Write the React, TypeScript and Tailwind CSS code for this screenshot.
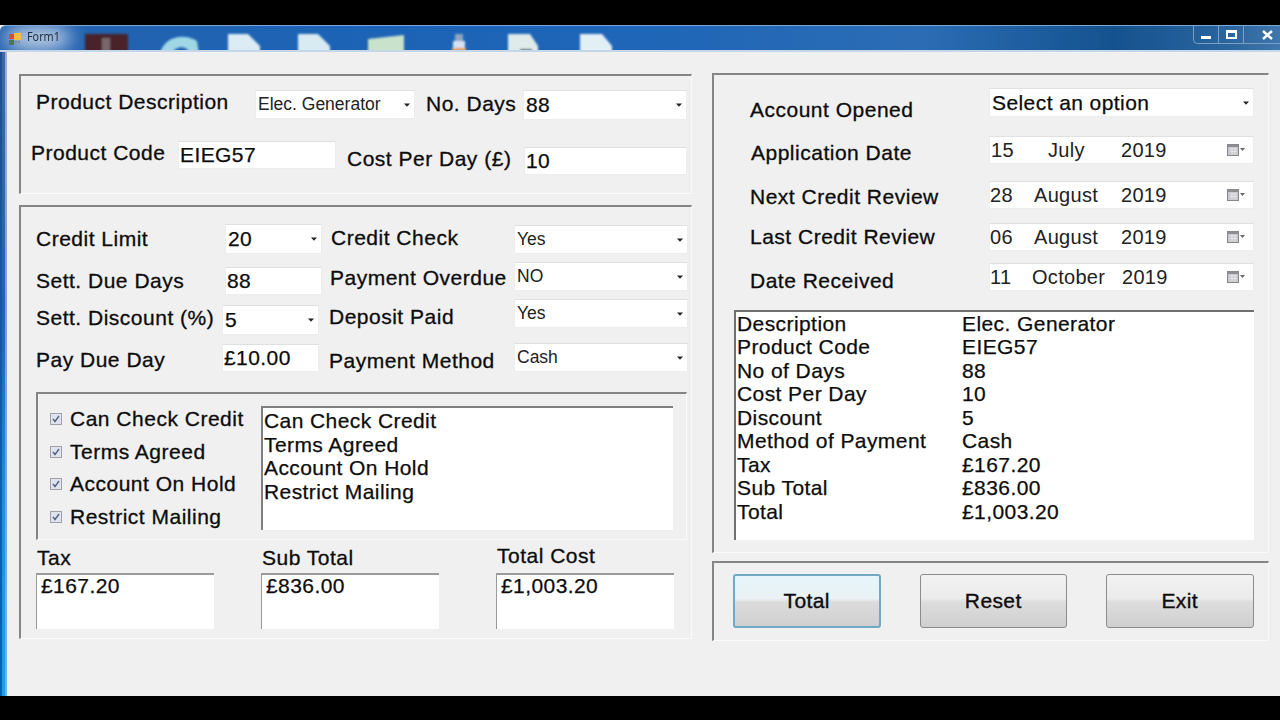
import React from "react";

const LABEL = "block whitespace-nowrap text-[21px] leading-[24px] tracking-[0.5px] text-[#0c0c0c] [-webkit-text-stroke:0.3px_#0c0c0c]";
const VALUE = "whitespace-nowrap text-[21px] tracking-[0.42px] text-[#0c0c0c] [-webkit-text-stroke:0.25px_#0c0c0c]";
const SMALL = "whitespace-nowrap text-[17.5px] text-[#222]";
const DATE = "whitespace-nowrap text-[20px] tracking-[0.3px] text-[#222]";
const FIELD = "flex items-center bg-white border border-[#ededed] border-t-[#e0e0e0] shrink-0";
const GROUP = "border-t-2 border-l-2 border-t-[#858585] border-l-[#858585] border-r border-b border-r-[#fafafa] border-b-[#fafafa]";

function Arrow() {
  return (
    <svg width="6" height="4" viewBox="0 0 6 4" className="ml-auto mr-[4px] shrink-0">
      <path d="M0 0.5H6L3 3.8Z" fill="#222" />
    </svg>
  );
}

function Lbl({ text, w, ml = 0, mt = 0 }: { text: string; w: string; ml?: number; mt?: number }) {
  return (
    <span className={`${w} shrink-0 ${LABEL}`} style={{ marginLeft: ml, marginTop: mt }}>
      {text}
    </span>
  );
}

function Combo({ text, w, h, mt = 0, small = false }: { text: string; w: string; h: string; mt?: number; small?: boolean }) {
  return (
    <div className={`${FIELD} ${w} ${h} pl-[2px]`} style={{ marginTop: mt }}>
      <span className={small ? SMALL : VALUE}>{text}</span>
      <Arrow />
    </div>
  );
}

function Input({ text, w, mt = 0 }: { text: string; w: string; mt?: number }) {
  return (
    <div className={`${FIELD} ${w} h-[28px] pl-[1px]`} style={{ marginTop: mt }}>
      <span className={VALUE}>{text}</span>
    </div>
  );
}

function Cal() {
  return (
    <svg width="18" height="12" viewBox="0 0 18 12" className="ml-auto mr-[8px] shrink-0">
      <rect x="0.5" y="0.5" width="11" height="11" fill="#c9c9cf" stroke="#85858c" />
      <rect x="0.5" y="0.5" width="11" height="2.5" fill="#8e8e95" />
      <path d="M3 5H10M3 7.5H10M5 4V10.5M8 4V10.5" stroke="#ececec" strokeWidth="0.8" />
      <path d="M13 4H18L15.5 7Z" fill="#666" />
    </svg>
  );
}

function DateField({ d, m, mx, y, dx = 2 }: { d: string; m: string; mx: string; y: string; dx?: number }) {
  return (
    <div className={`${FIELD} w-[265px] h-[28px]`}>
      <span className={`${DATE} w-[36px]`} style={{ marginLeft: dx - 1 }}>{d}</span>
      <span className={`${mx} ${DATE}`}>{m}</span>
      <span className={DATE}>{y}</span>
      <Cal />
    </div>
  );
}

function Check({ text }: { text: string }) {
  return (
    <div className="flex items-center h-[32.5px] pl-[12px]">
      <span className="flex items-center justify-center w-[12px] h-[12px] border border-[#a0a0a8] bg-[#dfe3ee] shrink-0">
        <svg width="8" height="8" viewBox="0 0 8 8">
          <path d="M1 4L3 6.5L7 1" fill="none" stroke="#56608a" strokeWidth="1.4" />
        </svg>
      </span>
      <span className={`ml-[8px] ${LABEL}`}>{text}</span>
    </div>
  );
}

function ResultBox({ label, value, w, ml, mt, gap }: { label: string; value: string; w: string; ml: string; mt: string; gap: string }) {
  return (
    <div className={`${w} ${ml} shrink-0`}>
      <span className={`${mt} ml-[1px] ${LABEL}`}>{label}</span>
      <div className={`${gap} h-[56px] bg-white border-t-2 border-l border-t-[#9a9a9a] border-l-[#9a9a9a] pl-[4px] ${VALUE} leading-[22px]`}>
        {value}
      </div>
    </div>
  );
}

const SUMMARY: [string, string][] = [
  ["Description", "Elec. Generator"],
  ["Product Code", "EIEG57"],
  ["No of Days", "88"],
  ["Cost Per Day", "10"],
  ["Discount", "5"],
  ["Method of Payment", "Cash"],
  ["Tax", "£167.20"],
  ["Sub Total", "£836.00"],
  ["Total", "£1,003.20"],
];

function TitleArt() {
  return (
    <svg width="700" height="26" viewBox="0 0 700 26" className="absolute left-0 top-0">
      <defs>
        <filter id="soft" x="-30%" y="-30%" width="160%" height="160%">
          <feGaussianBlur stdDeviation="1.1" />
        </filter>
        <filter id="glow" x="-30%" y="-60%" width="160%" height="220%">
          <feGaussianBlur stdDeviation="9" />
        </filter>
      </defs>
      <ellipse cx="38" cy="12" rx="34" ry="13" fill="#b9cbe4" filter="url(#glow)" />
      <g filter="url(#soft)">
        <rect x="85" y="8" width="43" height="20" fill="#48202c" />
        <rect x="102" y="12" width="8" height="16" fill="#77686c" />
        <path d="M160 28C163 12 182 6 197 15L199 28H190C188 20 176 18 172 28Z" fill="#9fd8e4" />
        <path d="M228 8H248L260 20V28H228Z" fill="#dcecf4" />
        <path d="M298 8H318L330 20V28H298Z" fill="#d8eaf2" />
        <path d="M368 13L404 9V28H368Z" fill="#c9e2cc" />
        <rect x="455" y="8" width="8" height="8" fill="#8fa4c4" />
        <rect x="453" y="15" width="12" height="7" fill="#d5e2f0" />
        <rect x="452" y="22" width="14" height="6" fill="#e89a4c" />
        <path d="M508 8H530L538 20V28H508Z" fill="#dfeaea" />
        <rect x="520" y="23" width="12" height="5" fill="#4a4a70" />
        <path d="M580 8H602L612 20V28H580Z" fill="#e2f0f6" />
      </g>
      <g>
        <rect x="9" y="8" width="5" height="5" fill="#d84a3a" />
        <rect x="14" y="7" width="7" height="7" fill="#f0c040" />
        <rect x="9" y="14" width="5" height="5" fill="#4a7a4a" />
        <rect x="15" y="15" width="2" height="2" fill="#888" />
        <rect x="18" y="15" width="2" height="2" fill="#888" />
      </g>
    </svg>
  );
}

export default function App() {
  return (
    <div className="w-[1280px] h-[720px] bg-black pt-[25px] pb-[24px] overflow-hidden font-['Liberation_Sans',sans-serif]">
      <div className="h-full flex flex-col bg-[#f0f0f0]">
        {/* title bar */}
        <div className="relative h-[27px] shrink-0 flex border-t border-t-[#7fa8d8] border-b-2 border-b-[#c4d6e8] rounded-tl-[6px] overflow-hidden bg-[linear-gradient(90deg,#2463ae_0%,#1c63b6_30%,#1f66b8_50%,#2b6cb4_72%,#14528f_87%,#2b659e_96%,#3f76ab_100%)]">
          <TitleArt />
          <span className="relative ml-[27px] mt-[3px] text-[12px] leading-[16px] text-[#1e2c3e] font-['Noto_Sans',sans-serif] scale-x-90 origin-left">Form1</span>
          <div className="relative ml-auto flex h-[18px] w-[87px] border-l border-b border-[#7d9fc4] rounded-bl-[5px]">
            <div className="w-[25px] flex items-center justify-center border-r border-[#7d9fc4]">
              <span className="mt-[5px] block w-[10px] h-[3px] bg-white" />
            </div>
            <div className="w-[25px] flex items-center justify-center border-r border-[#7d9fc4]">
              <span className="block w-[11px] h-[9px] border-2 border-t-[3px] border-white" />
            </div>
            <div className="flex-1 flex items-center justify-center pl-[10px]">
              <svg width="11" height="10" viewBox="0 0 11 10">
                <path d="M1 1L10 9M10 1L1 9" stroke="white" strokeWidth="2.4" />
              </svg>
            </div>
          </div>
        </div>

        {/* client area */}
        <div className="flex-1 flex">
          {/* window frame */}
          <div className="w-[7px] shrink-0 flex">
            <div className="w-[2px] bg-[linear-gradient(180deg,#1f4f94_0%,#1259a8_50%,#0f5fb0_100%)]" />
            <div className="w-[3px] bg-[linear-gradient(180deg,#3d68a8_0%,#1f63b4_40%,#2a8ad8_70%,#1ea0e8_100%)]" />
            <div className="w-[2px] bg-[linear-gradient(180deg,#9cb0cf_0%,#7fa0cc_40%,#6aa8dc_70%,#6cb8e4_100%)]" />
          </div>
          {/* left column */}
          <div className="ml-[12px] mt-[22px] w-[673px] shrink-0 flex flex-col gap-[11px]">
            <div className={`${GROUP} h-[120px]`}>
              <div className="flex h-[64px]">
                <Lbl text="Product Description" w="w-[219px]" ml={15} mt={14} />
                <Combo text="Elec. Generator" w="w-[160px]" h="h-[29px]" mt={14} small />
                <Lbl text="No. Days" w="w-[97px]" ml={11} mt={16} />
                <Combo text="88" w="w-[164px]" h="h-[30px]" mt={14} />
              </div>
              <div className="flex">
                <Lbl text="Product Code" w="w-[147px]" ml={10} mt={1} />
                <Input text="EIEG57" w="w-[158px]" mt={1} />
                <Lbl text="Cost Per Day (£)" w="w-[177px]" ml={11} mt={7} />
                <Input text="10" w="w-[163px]" mt={7} />
              </div>
            </div>

            <div className={`${GROUP} h-[434px] pt-[17px]`}>
              <div className="flex h-[38px]">
                <Lbl text="Credit Limit" w="w-[189px]" ml={15} mt={3} />
                <Combo text="20" w="w-[97px]" h="h-[30px]" />
                <Lbl text="Credit Check" w="w-[183px]" ml={9} mt={2} />
                <Combo text="Yes" w="w-[174px]" h="h-[29px]" mt={1} small />
              </div>
              <div className="flex h-[37px]">
                <Lbl text="Sett. Due Days" w="w-[189px]" ml={15} mt={7} />
                <Input text="88" w="w-[97px]" mt={5} />
                <Lbl text="Payment Overdue" w="w-[184px]" ml={8} mt={4} />
                <Combo text="NO" w="w-[174px]" h="h-[29px]" small />
              </div>
              <div className="flex h-[44px]">
                <Lbl text="Sett. Discount (%)" w="w-[186px]" ml={15} mt={7} />
                <Combo text="5" w="w-[97px]" h="h-[30px]" mt={6} />
                <Lbl text="Deposit Paid" w="w-[185px]" ml={10} mt={6} />
                <Combo text="Yes" w="w-[174px]" h="h-[29px]" small />
              </div>
              <div className="flex h-[49px]">
                <Lbl text="Pay Due Day" w="w-[186px]" ml={15} mt={5} />
                <Input text="£10.00" w="w-[97px]" mt={1} />
                <Lbl text="Payment Method" w="w-[185px]" ml={10} mt={6} />
                <Combo text="Cash" w="w-[174px]" h="h-[29px]" small />
              </div>

              <div className={`${GROUP} ml-[15px] w-[651px] h-[148px] flex`}>
                <div className="w-[223px] shrink-0 pt-[9px]">
                  <Check text="Can Check Credit" />
                  <Check text="Terms Agreed" />
                  <Check text="Account On Hold" />
                  <Check text="Restrict Mailing" />
                </div>
                <div className="mt-[12px] w-[412px] h-[124px] shrink-0 bg-white border-t-2 border-l-2 border-t-[#808080] border-l-[#808080] pl-[1px] pt-[1px]">
                  {["Can Check Credit", "Terms Agreed", "Account On Hold", "Restrict Mailing"].map((t) => (
                    <div key={t} className={`${VALUE} leading-[23.5px]`}>{t}</div>
                  ))}
                </div>
              </div>

              <div className="flex ml-[15px]">
                <ResultBox label="Tax" value="£167.20" w="w-[178px]" ml="ml-0" mt="mt-[6px]" gap="mt-[3px]" />
                <ResultBox label="Sub Total" value="£836.00" w="w-[178px]" ml="ml-[47px]" mt="mt-[6px]" gap="mt-[3px]" />
                <ResultBox label="Total Cost" value="£1,003.20" w="w-[178px]" ml="ml-[57px]" mt="mt-[4px]" gap="mt-[5px]" />
              </div>
            </div>
          </div>

          {/* right column */}
          <div className="ml-[20px] mt-[21px] w-[557px] shrink-0 flex flex-col gap-[8px]">
            <div className={`${GROUP} h-[480px] pt-[13px]`}>
              <div className="flex h-[48px]">
                <Lbl text="Account Opened" w="w-[239px]" ml={36} mt={10} />
                <Combo text="Select an option" w="w-[265px]" h="h-[29px]" />
              </div>
              <div className="flex h-[45px]">
                <Lbl text="Application Date" w="w-[238px]" ml={37} mt={5} />
                <DateField d="15" m="July" mx="ml-[21px] w-[73px]" y="2019" />
              </div>
              <div className="flex h-[42px]">
                <Lbl text="Next Credit Review" w="w-[239px]" ml={36} mt={4} />
                <DateField d="28" m="August" mx="ml-[8px] w-[87px]" y="2019" dx={1} />
              </div>
              <div className="flex h-[40px]">
                <Lbl text="Last Credit Review" w="w-[239px]" ml={36} mt={2} />
                <DateField d="06" m="August" mx="ml-[8px] w-[87px]" y="2019" dx={1} />
              </div>
              <div className="flex h-[47px]">
                <Lbl text="Date Received" w="w-[239px]" ml={36} mt={6} />
                <DateField d="11" m="October" mx="ml-[6px] w-[90px]" y="2019" dx={1} />
              </div>
              <div className="ml-[20px] w-[520px] h-[230px] bg-white border-t-2 border-l-2 border-t-[#707070] border-l-[#707070] pl-[1px]">
                {SUMMARY.map(([a, b]) => (
                  <div key={a} className={`flex ${VALUE} leading-[23.45px]`}>
                    <span className="w-[225px] shrink-0">{a}</span>
                    <span>{b}</span>
                  </div>
                ))}
              </div>
            </div>

            <div className={`${GROUP} h-[80px] flex pt-[11px] pl-[19px] gap-[39px]`}>
              {["Total", "Reset", "Exit"].map((t) => (
                <button
                  key={t}
                  className={`w-[147.5px] h-[54px] rounded-[3px] border text-[21px] text-[#0c0c0c] tracking-[0.4px] [-webkit-text-stroke:0.35px_#0c0c0c] ${
                    t === "Total"
                      ? "border-2 border-[#6fa9c4] bg-[linear-gradient(180deg,#e6f5fa_0%,#eaf2f4_45%,#dcdcdc_52%,#d0d0d0_100%)]"
                      : "border-[#8c8c8c] bg-[linear-gradient(180deg,#f2f2f2_0%,#ebebeb_45%,#dddddd_52%,#cfcfcf_100%)]"
                  }`}
                >
                  {t}
                </button>
              ))}
            </div>
          </div>
        </div>
      </div>
    </div>
  );
}
